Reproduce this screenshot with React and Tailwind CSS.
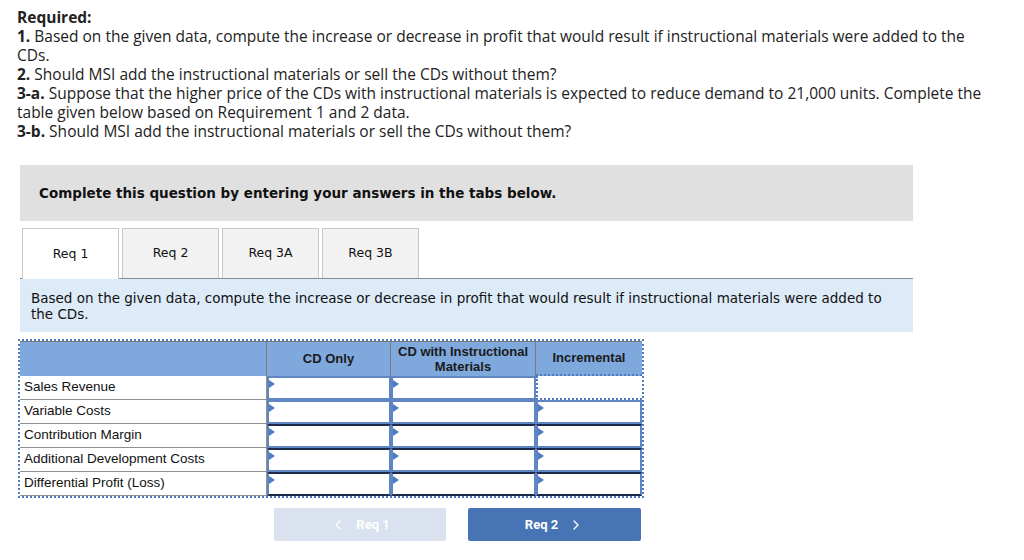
import React from 'react';
import { ChevronLeft, ChevronRight } from 'lucide-react';

const rows = [
    'Sales Revenue',
    'Variable Costs',
    'Contribution Margin',
    'Additional Development Costs',
    'Differential Profit (Loss)',
];

function InputCell({ dark, last }) {
    return (
        <div
            className={`relative h-full bg-white border-2 border-[#5f86c2] ${dark ? 'border-t-[#1c2b4a]' : ''} ${last ? 'border-b-[#1c2b4a]' : ''}`}
        >
            <span className="absolute left-0 top-[2px] w-0 h-0 border-y-[4px] border-y-transparent border-l-[6px] border-l-[#4d7cc0]" />
        </div>
    );
}

function Num({ children }) {
    return <b className="inline-block leading-[19px]">{children}</b>;
}

export default function App() {
    return (
        <div className="w-[1024px] h-[560px] bg-white overflow-hidden">
            <div className="pl-[17px] pt-[8px] pr-[34px] text-[15.5px] leading-[19px] text-[#222] font-['Open_Sans','Liberation_Sans',sans-serif]">
                <p className="font-bold">Required:</p>
                <p><Num>1.</Num> Based on the given data, compute the increase or decrease in profit that would result if instructional materials were added to the CDs.</p>
                <p><Num>2.</Num> Should MSI add the instructional materials or sell the CDs without them?</p>
                <p><Num>3-a.</Num> Suppose that the higher price of the CDs with instructional materials is expected to reduce demand to 21,000 units. Complete the table given below based on Requirement 1 and 2 data.</p>
                <p><Num>3-b.</Num> Should MSI add the instructional materials or sell the CDs without them?</p>
            </div>

            <div className="mx-[20px] mt-[24px] w-[893px] font-['DejaVu_Sans','Verdana',sans-serif] text-[#111]">
                <div className="h-[56px] bg-[#e0e0e0] pl-[19px] flex items-center text-[13.5px] font-bold">
                    Complete this question by entering your answers in the tabs below.
                </div>

                <div className="mt-[8px] flex items-end gap-[3px] pl-[2px] border-b border-[#8a8a8a] h-[50px]">
                    {['Req 1', 'Req 2', 'Req 3A', 'Req 3B'].map((t, i) => (
                        <div
                            key={t}
                            className={`w-[97px] h-[50px] flex items-center justify-center text-[12.5px] border border-[#c8c8c8] ${i === 0 ? 'bg-white border-b-0 border-[#b5b5b5] -mb-px h-[51px]' : 'bg-[#f2f2f2] border-b-0'}`}
                        >
                            {t}
                        </div>
                    ))}
                </div>

                <div className="bg-[#ddeaf7] px-[11px] pt-[11px] pb-[9px] pr-[16px] text-[13.5px] leading-[16px] text-[#111] h-[53px]">
                    Based on the given data, compute the increase or decrease in profit that would result if instructional materials were added to the CDs.
                </div>
            </div>

            <div className="ml-[18px] mt-[7px] w-[626px] border-2 border-dotted border-[#4f7cc0] font-['Liberation_Sans','Arial',sans-serif] text-[13.5px] text-[#111]">
                <div className="grid grid-cols-[247px_124px_145px_106px] h-[35px] bg-[#7fa9dc] border-t border-[#7a7a7a] font-bold text-[13px] text-[#1a1a1a]">
                    <div className="border-r border-[#7a7a7a]" />
                    <div className="flex items-center justify-center border-r border-[#7a7a7a]">CD Only</div>
                    <div className="flex items-center justify-center text-center leading-[15px] border-r border-[#7a7a7a]">
                        CD with Instructional<br />Materials
                    </div>
                    <div className="flex items-center justify-center border-b-2 border-dotted border-[#4f7cc0]">Incremental</div>
                </div>
                {rows.map((r, i) => (
                    <div key={r} className="grid grid-cols-[247px_124px_145px_106px] h-[24px]">
                        <div className="flex items-center pl-[4px] border-b border-r border-[#8f8f8f] bg-white">{r}</div>
                        <InputCell dark={i >= 2} last={i === 4} />
                        <InputCell dark={i >= 2} last={i === 4} />
                        {i === 0 ? (
                            <div className="bg-white border-2 border-dotted border-[#4f7cc0] border-r-0 border-t-0" />
                        ) : (
                            <InputCell dark={i >= 2} last={i === 4} />
                        )}
                    </div>
                ))}
            </div>

            <div className="flex gap-[22px] ml-[274px] mt-[10px] font-['Roboto','Liberation_Sans',sans-serif] text-[13px] font-bold text-white">
                <div className="w-[172px] h-[33px] rounded-[2px] bg-[#d9e2ee] flex items-center justify-center gap-[10px]">
                    <ChevronLeft size={16} strokeWidth={2} className="text-white" />
                    <span>Req 1</span>
                </div>
                <div className="w-[173px] h-[33px] rounded-[2px] bg-[#4674b5] flex items-center justify-center gap-[10px]">
                    <span>Req 2</span>
                    <ChevronRight size={16} strokeWidth={2} className="text-white" />
                </div>
            </div>
        </div>
    );
}
